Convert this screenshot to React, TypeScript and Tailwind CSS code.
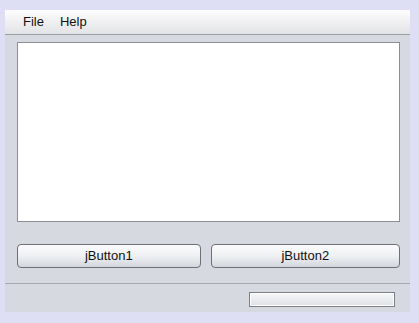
import React from 'react';

const font = { fontFamily: '"Liberation Sans", Arial, sans-serif' };

const SwingButton: React.FC<{ label: string; className?: string }> = ({ label, className }) => (
  <button
    className={`h-[24px] rounded-[4px] border border-[#6e7078] bg-gradient-to-b from-[#fbfbfc] via-[#eef0f3] to-[#d3d6dc] text-[13px] text-[#111] ${className ?? ''}`}
  >
    {label}
  </button>
);

export default function App() {
  return (
    <div className="w-[419px] h-[323px] bg-[#dedff5] pl-[5px] pt-[10px] pr-[9px] pb-[11px]" style={font}>
      <div className="flex h-full flex-col bg-[#d6d9df]">
        {/* menu bar */}
        <div className="flex h-[25px] items-center gap-[16px] border-b border-[#9c9ea6] bg-gradient-to-b from-[#fdfdfd] to-[#e2e3e6] pl-[18px] text-[13px] text-[#111]">
          <span>File</span>
          <span>Help</span>
        </div>

        <div className="flex flex-1 flex-col pl-[12px] pr-[10px] pt-[7px]">
          <div className="h-[180px] border border-[#8c8e96] bg-white" />

          <div className="mt-[22px] flex gap-[10px]">
            <SwingButton label="jButton1" className="w-[184px]" />
            <SwingButton label="jButton2" className="w-[190px]" />
          </div>
        </div>

        <div className="flex h-[29px] items-start justify-end border-t border-[#a6a8b0] pr-[15px] pt-[8px]">
          <div className="h-[15px] w-[146px] border border-[#7d7f87] bg-gradient-to-b from-[#f6f7f8] to-[#dfe1e5] shadow-[inset_0_0_0_1px_#ffffff]" />
        </div>
      </div>
    </div>
  );
}
